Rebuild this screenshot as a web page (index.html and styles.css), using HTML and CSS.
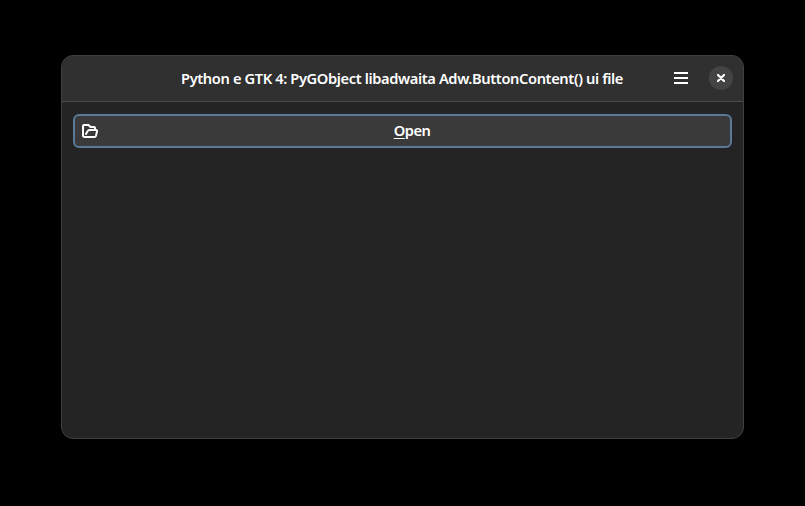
FILE: index.html
```html
<!DOCTYPE html>
<html lang="en">
<head>
<meta charset="utf-8">
<title>Adw.ButtonContent</title>
<link rel="stylesheet" href="styles.css">
</head>
<body>
<main class="window">
  <header class="headerbar">
    <h1 class="title">Python e GTK 4: PyGObject libadwaita Adw.ButtonContent() ui file</h1>
    <div class="controls">
      <button class="menu">
        <svg width="16" height="16" viewBox="0 0 16 16"><path d="M1 2h14v2H1zM1 7h14v2H1zM1 12h14v2H1z" fill="#fff"/></svg>
      </button>
      <button class="close">
        <svg width="16" height="16" viewBox="0 0 16 16"><path d="M5 5l6 6M11 5l-6 6" stroke="#fff" stroke-width="2.200" stroke-linecap="round"/></svg>
      </button>
    </div>
  </header>
  <section class="content">
    <button class="open">
      <svg class="folder" width="16" height="16" viewBox="0 0 16 16" fill="none" stroke="#fff" stroke-width="2" stroke-linejoin="round" stroke-linecap="round"><path d="M13 6V5a1 1 0 0 0-1-1H8.500L6.500 2H2a1 1 0 0 0-1 1v9.500a1.500 1.500 0 0 0 1.500 1.500H12.500a1.500 1.500 0 0 0 1.400-1L15 8.500a1 1 0 0 0-1-1.500H7.500a2 2 0 0 0-1.800 1.100L4 11"/></svg>
      <span class="label"><span class="mnemonic">O</span>pen</span>
    </button>
  </section>
</main>
</body>
</html>
```

FILE: styles.css
```css
* { box-sizing: border-box; }
body {
  margin: 0;
  height: 506px;
  padding: 55px 61px 67px;
  background: #000;
  color: #fff;
  font-family: "Noto Sans", sans-serif;
  overflow: hidden;
}
button {
  margin: 0;
  padding: 0;
  border: 0;
  background: none;
  color: inherit;
  font: inherit;
}
svg { display: block; }
.window {
  width: 683px;
  height: 384px;
  border: 1px solid #404040;
  border-radius: 12px;
  background: #242424;
  overflow: hidden;
}
.headerbar {
  display: grid;
  grid-template-columns: 1fr auto 1fr;
  align-items: center;
  height: 46px;
  padding-bottom: 1px;
  border-bottom: 1px solid #4a4a4a;
  background: #303030;
}
.title {
  grid-column: 2;
  margin: 0 1px 0 0;
  font-size: 14.667px;
  font-weight: 600;
  line-height: 20px;
  letter-spacing: -0.385px;
  white-space: nowrap;
}
.controls {
  display: flex;
  align-items: center;
  justify-content: flex-end;
  gap: 20px;
  padding-right: 10px;
}
.close {
  display: grid;
  place-items: center;
  width: 24px;
  height: 24px;
  border-radius: 50%;
  background: #444;
}
.content { padding: 12px 11px; }
.open {
  display: flex;
  align-items: center;
  width: 659px;
  height: 34px;
  padding: 0 7px;
  border: 2px solid #597a98;
  border-radius: 6px;
  background: #3a3a3a;
}
.label {
  flex: 1;
  padding: 0 0 2px 3px;
  text-align: center;
  font-size: 14.667px;
  font-weight: 600;
  line-height: 20px;
  letter-spacing: -0.5px;
}
.mnemonic {
  text-decoration: underline;
  text-decoration-thickness: 1px;
  text-underline-offset: 2px;
}
```
